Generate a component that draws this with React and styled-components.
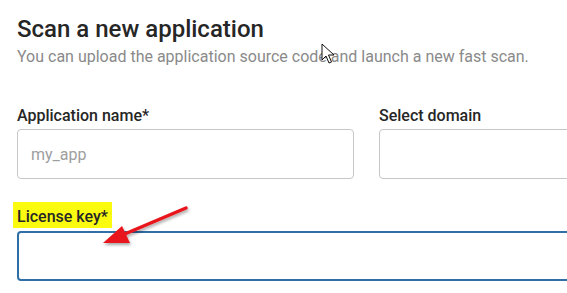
import React from "react";
import styled, { createGlobalStyle } from "styled-components";

const Global = createGlobalStyle`
  html, body {
    margin: 0;
    padding: 0;
    background: #fff;
    overflow: hidden;
  }
  body {
    font-family: Roboto, "Liberation Sans", sans-serif;
  }
`;

const Page = styled.div`
  position: relative;
  width: 567px;
  height: 293px;
  padding: 15px 0 0 17px;
  box-sizing: border-box;
  overflow: hidden;
`;

const Title = styled.h1`
  margin: 0;
  font-size: 24px;
  line-height: 28px;
  font-weight: 500;
  color: #262626;
`;

const Subtitle = styled.p`
  margin: 4px 0 0;
  font-size: 16px;
  line-height: 19px;
  color: #8a8a8a;
  white-space: nowrap;
`;

const Row = styled.div`
  display: flex;
  gap: 25px;
  margin-top: ${p => p.$top || 0}px;
`;

const Field = styled.div`
  display: flex;
  flex-direction: column;
  flex: 0 0 ${p => p.$width}px;
`;

const Label = styled.label`
  font-size: 16px;
  line-height: 19px;
  font-weight: 500;
  color: #262626;
  margin-bottom: 4px;
  white-space: nowrap;
`;

const Highlight = styled.span`
  align-self: flex-start;
  margin: 0 0 3px -4px;
  padding: 5px 4px 2px;
  background: #fbfb10;
  font-size: 16px;
  line-height: 19px;
  font-weight: 500;
  color: #262626;
`;

const Input = styled.input`
  box-sizing: border-box;
  height: 50px;
  width: 100%;
  padding: 0 13px;
  border: ${p => (p.$active ? "2px solid #2f6ea6" : "1px solid #c6c6c6")};
  border-radius: 4px;
  font-family: inherit;
  font-size: 16px;
  color: #222;
  outline: none;
  &::placeholder {
    color: #9e9e9e;
  }
`;

const Overlay = styled.svg`
  position: absolute;
  left: 0;
  top: 0;
  pointer-events: none;
`;

function Annotations() {
  return (
    <Overlay width="567" height="293" viewBox="0 0 567 293">
      <defs>
        <filter id="shadow" x="-20%" y="-20%" width="140%" height="140%">
          <feDropShadow dx="1" dy="2" stdDeviation="1.5" floodColor="#000" floodOpacity="0.35" />
        </filter>
      </defs>
      <g filter="url(#shadow)">
        <line x1="186" y1="208" x2="120" y2="236" stroke="#e8161b" strokeWidth="3.5" strokeLinecap="round" />
        <polygon points="103,243 122,226 130,243" fill="#e8161b" />
      </g>
      <path
        d="M322 44 L322 60 L326 56 L329 63 L331.5 62 L328.5 55 L334 55 Z"
        fill="#fff"
        stroke="#111"
        strokeWidth="1"
        strokeLinejoin="round"
      />
    </Overlay>
  );
}

export default function App() {
  return (
    <Page>
      <Global />
      <Title>Scan a new application</Title>
      <Subtitle>
        You can upload the application source code and launch a new fast scan.
      </Subtitle>
      <Row $top={40}>
        <Field $width={337}>
          <Label>Application name*</Label>
          <Input placeholder="my_app" />
        </Field>
        <Field $width={337}>
          <Label>Select domain</Label>
          <Input />
        </Field>
      </Row>
      <Row $top={23}>
        <Field $width={600}>
          <Highlight>License key*</Highlight>
          <Input $active />
        </Field>
      </Row>
      <Annotations />
    </Page>
  );
}
